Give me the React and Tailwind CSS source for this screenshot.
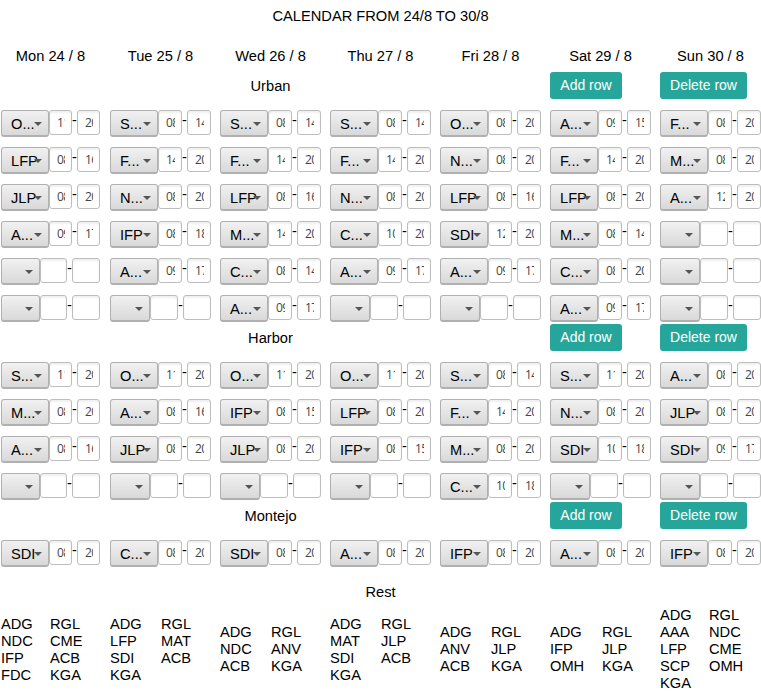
const DAYS = ['Mon 24 / 8', 'Tue 25 / 8', 'Wed 26 / 8', 'Thu 27 / 8', 'Fri 28 / 8', 'Sat 29 / 8', 'Sun 30 / 8'];

// Each cell is "name from to"; an empty string is an unassigned shift.
const URBAN = [
  ['O... 11 20', 'S... 08 14', 'S... 08 14', 'S... 08 14', 'O... 08 20', 'A... 09 15', 'F... 08 20'],
  ['LFP 08 16', 'F... 14 20', 'F... 14 20', 'F... 14 20', 'N... 08 20', 'F... 14 20', 'M... 08 20'],
  ['JLP 08 20', 'N... 08 20', 'LFP 08 16', 'N... 08 20', 'LFP 08 16', 'LFP 08 20', 'A... 12 20'],
  ['A... 09 17', 'IFP 08 18', 'M... 14 20', 'C... 10 20', 'SDI 12 20', 'M... 08 14', ''],
  ['', 'A... 09 17', 'C... 08 14', 'A... 09 17', 'A... 09 17', 'C... 08 20', ''],
  ['', '', 'A... 09 17', '', '', 'A... 09 17', ''],
];

const HARBOR = [
  ['S... 11 20', 'O... 11 20', 'O... 11 20', 'O... 11 20', 'S... 08 14', 'S... 11 20', 'A... 08 20'],
  ['M... 08 20', 'A... 08 16', 'IFP 08 15', 'LFP 08 20', 'F... 14 20', 'N... 08 20', 'JLP 08 20'],
  ['A... 08 16', 'JLP 08 20', 'JLP 08 20', 'IFP 08 15', 'M... 08 20', 'SDI 10 18', 'SDI 09 17'],
  ['', '', '', '', 'C... 10 18', '', ''],
];

const MONTEJO = [['SDI 08 20', 'C... 08 20', 'SDI 08 20', 'A... 08 20', 'IFP 08 20', 'A... 08 20', 'IFP 08 20']];

const REST = [
  { first: ['ADG', 'NDC', 'IFP', 'FDC'], second: ['RGL', 'CME', 'ACB', 'KGA'], width: 'w-[49px]' },
  { first: ['ADG', 'LFP', 'SDI', 'KGA'], second: ['RGL', 'MAT', 'ACB'], width: 'w-[51px]' },
  { first: ['ADG', 'NDC', 'ACB'], second: ['RGL', 'ANV', 'KGA'], width: 'w-[51px]' },
  { first: ['ADG', 'MAT', 'SDI', 'KGA'], second: ['RGL', 'JLP', 'ACB'], width: 'w-[51px]' },
  { first: ['ADG', 'ANV', 'ACB'], second: ['RGL', 'JLP', 'KGA'], width: 'w-[51px]' },
  { first: ['ADG', 'IFP', 'OMH'], second: ['RGL', 'JLP', 'KGA'], width: 'w-[52px]' },
  { first: ['ADG', 'AAA', 'LFP', 'SCP', 'KGA'], second: ['RGL', 'NDC', 'CME', 'OMH'], width: 'w-[49px]' },
];

function Days({ className, children }) {
  return (
    <div className={`grid grid-cols-[109px_110px_110px_110px_110px_110px_101px] pl-px ${className}`}>{children}</div>
  );
}

function Hour({ value, className }) {
  return (
    <span
      className={`block h-[25px] rounded-[3px] border border-[#bdbdbd] bg-white pl-[7px] pr-[6px] shadow-[inset_0_2px_2px_#f0f0f0] ${className}`}
    >
      <span className="block w-full overflow-hidden whitespace-nowrap font-['Open_Sans',sans-serif] text-[12px] leading-[23px] tracking-[-0.7px] text-[#444]">
        {value}
      </span>
    </span>
  );
}

function Shift({ cell, first }) {
  const [name, from, to] = cell ? cell.split(' ') : ['', '', ''];
  const select = cell ? 'w-12' : first ? 'w-[39px]' : 'w-10';
  const start = cell ? (first ? 'w-[23px]' : 'w-6') : first ? 'w-[27px]' : 'w-7';
  return (
    <div className={`flex h-[27px] items-start ${first ? 'w-[99px]' : 'w-[101px]'}`}>
      <button
        className={`relative h-[27px] shrink-0 rounded-[3px] border border-b-2 border-[#b0b0b0] bg-linear-to-b from-[#f1f1f1] to-[#d9d9d9] pl-[9px] text-left leading-[26px] ${select}`}
      >
        {name}
        <svg className="absolute right-[6px] top-[11px]" width="8" height="4" viewBox="0 0 8 4">
          <path d="M0 0h8L4 4z" fill="#555" />
        </svg>
      </button>
      <Hour value={from} className={`shrink-0 ${start}`} />
      <span className="w-[5px] shrink-0 leading-[21px]">-</span>
      <Hour value={to} className="min-w-0 flex-1" />
    </div>
  );
}

function Shifts({ rows }) {
  return (
    <div className="flex flex-col gap-[10px] pt-[11px]">
      {rows.map((row, r) => (
        <Days key={r} className="">
          {row.map((cell, d) => (
            <Shift key={d} cell={cell} first={d === 0} />
          ))}
        </Days>
      ))}
    </div>
  );
}

function Action({ className, children }) {
  return (
    <button
      className={`h-[27px] rounded-[3px] bg-[#26a69a] text-center text-[14px] leading-[27px] text-white ${className}`}
    >
      {children}
    </button>
  );
}

function Section({ title, rows }) {
  return (
    <section className="mb-[2px]">
      <Days className="h-[27px]">
        <div className="col-start-3 w-[101px] text-center leading-[29px]">{title}</div>
        <Action className="col-start-6 w-[72px]">Add row</Action>
        <Action className="w-[87px]">Delete row</Action>
      </Days>
      <Shifts rows={rows} />
    </section>
  );
}

function Names({ list }) {
  return list.map((name) => <div key={name}>{name}</div>);
}

export default function App() {
  return (
    <main className="h-[691px] w-[761px] overflow-hidden bg-white font-['Liberation_Sans',Arial,sans-serif] text-[14.67px] leading-[17px] text-black">
      <h1 className="pt-2 text-center">CALENDAR FROM 24/8 TO 30/8</h1>
      <Days className="mt-[23px] h-6 text-center">
        {DAYS.map((day) => (
          <div key={day} className="w-[101px] first:w-[99px]">
            {day}
          </div>
        ))}
      </Days>
      <Section title="Urban" rows={URBAN} />
      <Section title="Harbor" rows={HARBOR} />
      <Section title="Montejo" rows={MONTEJO} />
      <Days className="mt-[17px]">
        <div className="col-start-4 w-[101px] text-center">Rest</div>
      </Days>
      <Days className="mt-[6px] h-[85px] items-center">
        {REST.map((day, i) => (
          <div key={i} className="flex items-start">
            <div className={day.width}>
              <Names list={day.first} />
            </div>
            <div>
              <Names list={day.second} />
            </div>
          </div>
        ))}
      </Days>
    </main>
  );
}
